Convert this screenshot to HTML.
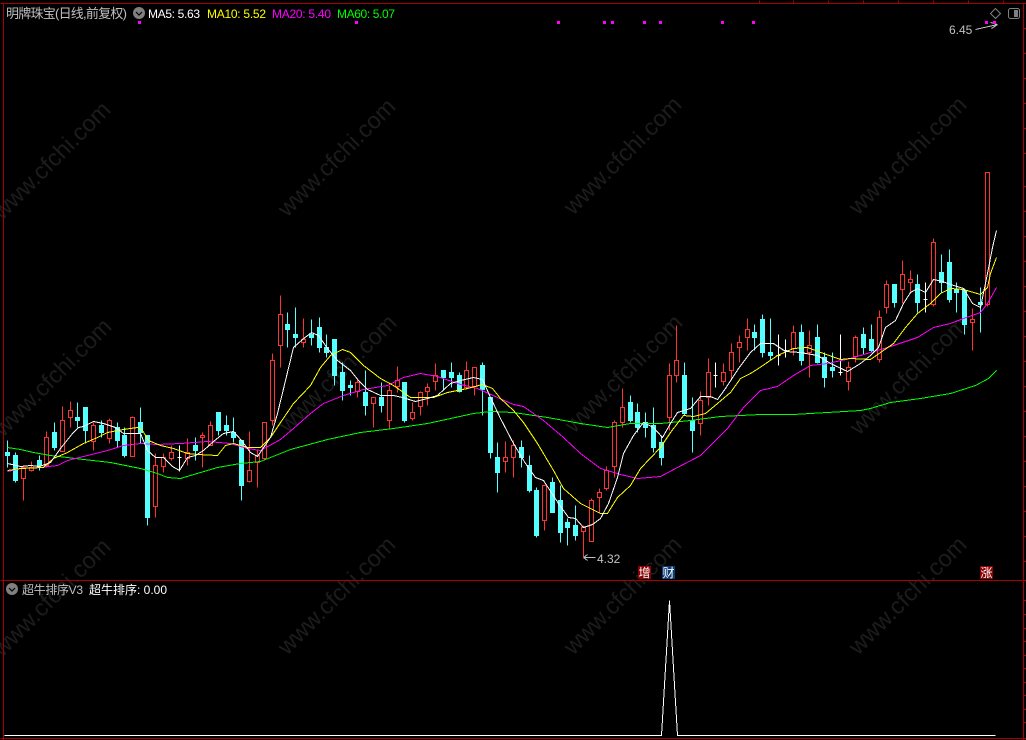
<!DOCTYPE html>
<html><head><meta charset="utf-8"><title>明牌珠宝</title>
<style>html,body{margin:0;padding:0;background:#000;width:1026px;height:740px;overflow:hidden}svg{display:block}
text{font-family:"Liberation Sans","Noto Sans CJK SC",sans-serif;font-size:12px}
.cn{font-family:"Liberation Sans","Noto Sans CJK SC",sans-serif}
text.wm{font-size:23.5px;fill:#1c1c1c}</style></head><body>
<svg width="1026" height="740" viewBox="0 0 1026 740" xmlns="http://www.w3.org/2000/svg">
<rect width="1026" height="740" fill="#000"/>
<g>
<text class="wm" transform="translate(57,166) rotate(-45)" text-anchor="middle">www.cfchi.com</text>
<text class="wm" transform="translate(342,163) rotate(-45)" text-anchor="middle">www.cfchi.com</text>
<text class="wm" transform="translate(628,161) rotate(-45)" text-anchor="middle">www.cfchi.com</text>
<text class="wm" transform="translate(913,161) rotate(-45)" text-anchor="middle">www.cfchi.com</text>
<text class="wm" transform="translate(58,383) rotate(-45)" text-anchor="middle">www.cfchi.com</text>
<text class="wm" transform="translate(343,379) rotate(-45)" text-anchor="middle">www.cfchi.com</text>
<text class="wm" transform="translate(629,379) rotate(-45)" text-anchor="middle">www.cfchi.com</text>
<text class="wm" transform="translate(914,381) rotate(-45)" text-anchor="middle">www.cfchi.com</text>
<text class="wm" transform="translate(57,603) rotate(-45)" text-anchor="middle">www.cfchi.com</text>
<text class="wm" transform="translate(342,601) rotate(-45)" text-anchor="middle">www.cfchi.com</text>
<text class="wm" transform="translate(628,601) rotate(-45)" text-anchor="middle">www.cfchi.com</text>
<text class="wm" transform="translate(913,601) rotate(-45)" text-anchor="middle">www.cfchi.com</text>
</g>
<g transform="translate(.5,.5)" shape-rendering="crispEdges" fill="none" stroke-width="1">
<!-- frame -->
<path stroke="#a80000" d="M0 3H1026M3 3V740M1023 3V740M0 580H1026M0 738H1026M759 0V3M793 0V3M828 0V3M863 0V3M898 0V3M933 0V3M968 0V3M1003 0V3M1023 28H1026M1023 53H1026M1023 78H1026M1023 103H1026M1023 128H1026M1023 153H1026M1023 186H1026M1023 211H1026M1023 236H1026M1023 261H1026M1023 286H1026M1023 311H1026M1023 336H1026M1023 361H1026M1023 386H1026M1023 411H1026M1023 436H1026M1023 461H1026M1023 486H1026M1023 511H1026M1023 536H1026M1023 561H1026M1023 600H1026M1023 614H1026M1023 628H1026M1023 641H1026M1023 655H1026M1023 668H1026M1023 682H1026M1023 695H1026M1023 709H1026M1023 722H1026"/>
<!-- red wicks -->
<path stroke="#ff3232" d="M23 465V500M31 461V471M46 431V466M62 406V451M70 401V427M93 422V450M109 418V443M132 416V456M155 453V517M163 453V472M171 445V460M187 438V465M202 432V467M210 421V445M249 431V482M257 450V487M264 422V460M272 353V425M280 295V367M303 318V347M357 378V397M373 397V427M389 385V428M397 366V392M412 402V420M420 391V415M427 383V405M435 363V390M466 361V389M474 367V395M505 441V472M513 440V477M544 485V530M583 525V557M591 498V541M599 488V512M606 466V490M614 420V477M622 388V427M669 363V430M676 325V382M700 391V435M708 358V405M723 363V385M731 343V380M739 335V362M747 318V350M793 325V355M809 330V377M848 361V390M855 335V362M879 310V362M886 280V313M902 260V303M910 270V293M933 238V306M972 308V350M987 172V306"/>
<!-- red bodies -->
<path stroke="#ff3232" fill="#000" d="M21 467h4V478h-4zM29 467h4V470h-4zM44 437h4V465h-4zM60 420h4V451h-4zM68 410h4V417h-4zM91 425h4V441h-4zM107 420h4V438h-4zM130 417h4V456h-4zM153 465h4V506h-4zM161 457h4V466h-4zM169 452h4V458h-4zM185 452h4V458h-4zM200 435h4V437h-4zM208 425h4V445h-4zM247 470h4V481h-4zM255 455h4V462h-4zM262 422h4V458h-4zM270 360h4V420h-4zM278 314h4V345h-4zM301 339h4V342h-4zM355 382h4V391h-4zM371 397h4V403h-4zM387 390h4V420h-4zM395 380h4V386h-4zM410 412h4V418h-4zM418 392h4V406h-4zM425 387h4V391h-4zM433 375h4V381h-4zM464 370h4V387h-4zM472 367h4V386h-4zM503 457h4V461h-4zM511 445h4V457h-4zM542 485h4V520h-4zM581 527h4V531h-4zM589 500h4V541h-4zM597 492h4V497h-4zM604 470h4V488h-4zM612 422h4V466h-4zM620 407h4V422h-4zM667 375h4V417h-4zM674 360h4V375h-4zM698 400h4V423h-4zM706 372h4V397h-4zM721 372h4V381h-4zM729 352h4V370h-4zM737 342h4V347h-4zM745 329h4V337h-4zM791 332h4V348h-4zM807 345h4V352h-4zM846 367h4V381h-4zM853 337h4V356h-4zM877 317h4V359h-4zM884 284h4V307h-4zM900 274h4V289h-4zM908 279h4V282h-4zM931 242h4V304h-4zM970 319h4V322h-4zM985 172h4V304h-4z"/>
<!-- cyan -->
<path stroke="#54ffff" fill="#54ffff" d="M7 440V467M15 452V482M39 455V470M54 422V450M77 402V427M85 407V443M101 420V437M117 422V447M124 427V457M140 407V443M147 435V525M195 437V460M218 412V435M226 415V435M233 417V442M241 440V500M287 312V347M295 307V347M311 319V345M319 317V352M326 334V357M334 339V385M342 362V400M350 380V395M365 370V415M381 382V412M404 382V422M443 370V389M451 362V387M459 372V392M482 362V415M490 397V458M497 442V492M521 440V467M529 455V492M536 487V537M552 477V512M560 485V542M567 518V545M575 505V540M630 395V422M637 403V432M645 412V437M653 407V452M661 435V465M684 362V415M692 397V452M754 324V350M762 314V357M770 318V360M801 324V365M817 324V363M824 352V387M832 352V377M863 327V354M871 324V352M894 284V307M917 274V312M941 254V292M949 249V302M956 282V312M964 288V334M980 287V332
M5 452h4V455h-4zM13 455h4V480h-4zM37 460h4V465h-4zM52 432h4V447h-4zM75 417h4V420h-4zM83 407h4V430h-4zM99 425h4V432h-4zM115 427h4V440h-4zM122 435h4V455h-4zM138 422h4V432h-4zM145 435h4V517h-4zM193 445h4V450h-4zM216 412h4V430h-4zM224 425h4V430h-4zM231 432h4V437h-4zM239 440h4V485h-4zM285 324h4V329h-4zM293 334h4V337h-4zM309 334h4V337h-4zM317 327h4V347h-4zM324 347h4V352h-4zM332 339h4V375h-4zM340 372h4V390h-4zM348 385h4V387h-4zM363 392h4V405h-4zM379 397h4V405h-4zM402 382h4V420h-4zM441 370h4V377h-4zM449 372h4V377h-4zM457 375h4V391h-4zM480 365h4V389h-4zM488 397h4V452h-4zM495 457h4V472h-4zM519 447h4V457h-4zM527 465h4V490h-4zM534 490h4V535h-4zM550 482h4V512h-4zM558 500h4V532h-4zM565 522h4V527h-4zM573 525h4V535h-4zM628 402h4V420h-4zM635 412h4V427h-4zM643 422h4V427h-4zM651 425h4V447h-4zM659 442h4V457h-4zM682 375h4V413h-4zM690 420h4V430h-4zM752 332h4V337h-4zM760 319h4V352h-4zM768 352h4V355h-4zM799 332h4V360h-4zM815 337h4V362h-4zM822 357h4V377h-4zM830 367h4V370h-4zM861 334h4V347h-4zM869 339h4V350h-4zM892 284h4V302h-4zM915 284h4V302h-4zM939 272h4V282h-4zM947 262h4V299h-4zM954 289h4V292h-4zM962 290h4V324h-4zM978 302h4V304h-4z"/>
<!-- doji -->
<path stroke="#fff" d="M179 445V471M177 457H181M715 362V387M713 375H717M778 334V365M776 355H780M785 339V357M783 350H787M840 334V375M838 372H842M925 282V312M923 299H927"/>
<!-- MA60 -->
<path stroke="#00ff00" d="M7 447L20 449L33 452L50 455L67 457L83 459L110 462L140 468L157 473L167 477L180 478L200 472L217 467L240 463L260 461L290 449L327 439L360 432L393 428L427 423L473 413L490 411L513 412L547 417L580 423L607 427L630 423L660 423L690 420L720 416L760 414L793 414L827 412L860 410L870 408L890 402L920 398L950 393L975 385L988 378L996 370"/>
<!-- MA20 -->
<path stroke="#ff00ff" d="M7 471L20 468L40 467L57 465L67 460L87 455L107 450L123 445L140 443L157 444L180 443L207 441L230 443L247 448L260 450L280 439L293 428L310 413L323 403L343 395L363 389L387 385L403 377L420 373L437 376L460 384L477 388L497 397L513 404L523 406L543 420L563 437L580 453L600 468L620 474L637 478L660 476L677 467L700 455L717 438L727 428L743 407L760 390L777 386L793 375L810 365L827 363L850 358L870 352L887 347L917 337L933 327L950 323L963 318L980 312L987 303L996 287"/>
<!-- MA10 -->
<path stroke="#ffff00" d="M7 470L20 468L43 467L53 458L67 452L83 443L97 437L107 432L123 429L137 427L142 430L148 440L160 445L173 448L187 453L197 454L217 455L225 445L233 443L247 447L260 447L270 437L280 422L293 403L310 385L320 367L330 355L342 349L350 352L363 365L380 378L393 385L410 397L420 397L433 397L447 392L467 388L482 384L492 388L500 398L513 410L523 422L537 443L553 470L563 488L580 503L600 513L607 513L617 497L630 485L640 468L660 447L670 432L683 415L693 416L705 413L717 403L730 392L740 378L750 373L758 368L777 355L793 348L807 347L823 353L840 359L850 358L870 359L880 352L893 343L905 327L917 313L930 303L940 293L950 288L963 289L980 294L987 287L990 273L996 257"/>
<!-- MA5 -->
<path stroke="#ffffff" d="M7 463L20 466L30 465L39 466L50 462L60 448L72 433L78 427L83 426L93 421L103 423L115 427L123 433L140 433L147 450L155 457L163 457L172 466L179 470L187 457L195 455L203 450L213 441L223 433L233 431L241 440L250 452L257 456L270 437L277 413L285 380L293 347L302 339L311 332L318 335L327 348L337 360L350 370L358 380L367 389L380 395L393 395L402 397L415 401L427 398L437 395L450 383L460 380L473 377L482 379L490 397L500 418L513 443L525 463L535 477L543 480L558 503L568 517L575 518L583 527L592 524L600 518L608 503L617 477L623 453L633 435L643 422L653 427L662 437L670 423L677 412L690 408L700 396L710 396L717 399L725 388L738 368L750 352L760 343L773 343L785 351L800 352L817 355L830 363L847 371L860 363L870 355L878 347L885 327L895 320L903 303L910 292L917 288L925 292L933 279L942 281L950 284L963 288L972 303L980 307L987 273L992 247L996 230"/>
<!-- sub chart -->
<path stroke="#ffffff" d="M4 735H661L669 600L677 735H995"/>
<!-- arrows -->
<path stroke="#c0c0c0" d="M583 557H595M583 557L587 554M583 557L587 560M975 29L997 24M997 24L990 22M997 24L991 28"/>
</g>
<!-- markers -->
<g fill="#ff00ff" shape-rendering="crispEdges">
<rect x="138" y="21" width="3" height="3"/><rect x="355" y="21" width="3" height="3"/><rect x="557" y="21" width="3" height="3"/><rect x="603" y="21" width="3" height="3"/><rect x="611" y="21" width="3" height="3"/><rect x="643" y="21" width="3" height="3"/><rect x="659" y="21" width="3" height="3"/><rect x="721" y="21" width="3" height="3"/><rect x="752" y="21" width="3" height="3"/><rect x="985" y="21" width="3" height="3"/><rect x="993" y="21" width="3" height="3"/>
</g>
<!-- top right icons -->
<path d="M995.5 8.5L1000.5 13.5L995.5 18.5L990.5 13.5Z" fill="none" stroke="#808080"/>
<rect x="1008.5" y="8.5" width="11" height="10" rx="2" fill="none" stroke="#808080"/><rect x="1014" y="10" width="4" height="7" fill="#808080"/>
<!-- header -->
<text class="cn" x="6" y="18" fill="#c0c0c0" textLength="121" lengthAdjust="spacing" style="font-size:13px">明牌珠宝(日线,前复权)</text>
<circle cx="139" cy="13" r="6" fill="#808080"/><path d="M136 12L139 15L142 12" fill="none" stroke="#000" stroke-width="1.2"/>
<text x="148" y="18" fill="#ffffff" textLength="52">MA5: 5.63</text>
<text x="207" y="18" fill="#ffff00" textLength="59">MA10: 5.52</text>
<text x="272" y="18" fill="#ff00ff" textLength="59">MA20: 5.40</text>
<text x="337" y="18" fill="#00ff00" textLength="58">MA60: 5.07</text>
<text x="949" y="34" fill="#c0c0c0">6.45</text>
<text x="597" y="563" fill="#c0c0c0">4.32</text>
<!-- tags -->
<rect x="638" y="566" width="13" height="13" fill="#8b0000"/><rect x="662" y="566" width="13" height="13" fill="#0c3c74"/><rect x="980" y="566" width="13" height="13" fill="#8b0000"/>
<text x="638.5" y="577" fill="#fff" style="font-size:12px">增</text>
<text x="662.5" y="577" fill="#fff" style="font-size:12px">财</text>
<text x="980.5" y="577" fill="#fff" style="font-size:12px">涨</text>
<!-- sub header -->
<circle cx="12" cy="589" r="6" fill="#808080"/><path d="M9 588L12 591L15 588" fill="none" stroke="#000" stroke-width="1.2"/>
<text x="22" y="594" fill="#c0c0c0" textLength="61">超牛排序V3</text>
<text x="89" y="594" fill="#ffffff" textLength="78">超牛排序: 0.00</text>
</svg>
</body></html>
